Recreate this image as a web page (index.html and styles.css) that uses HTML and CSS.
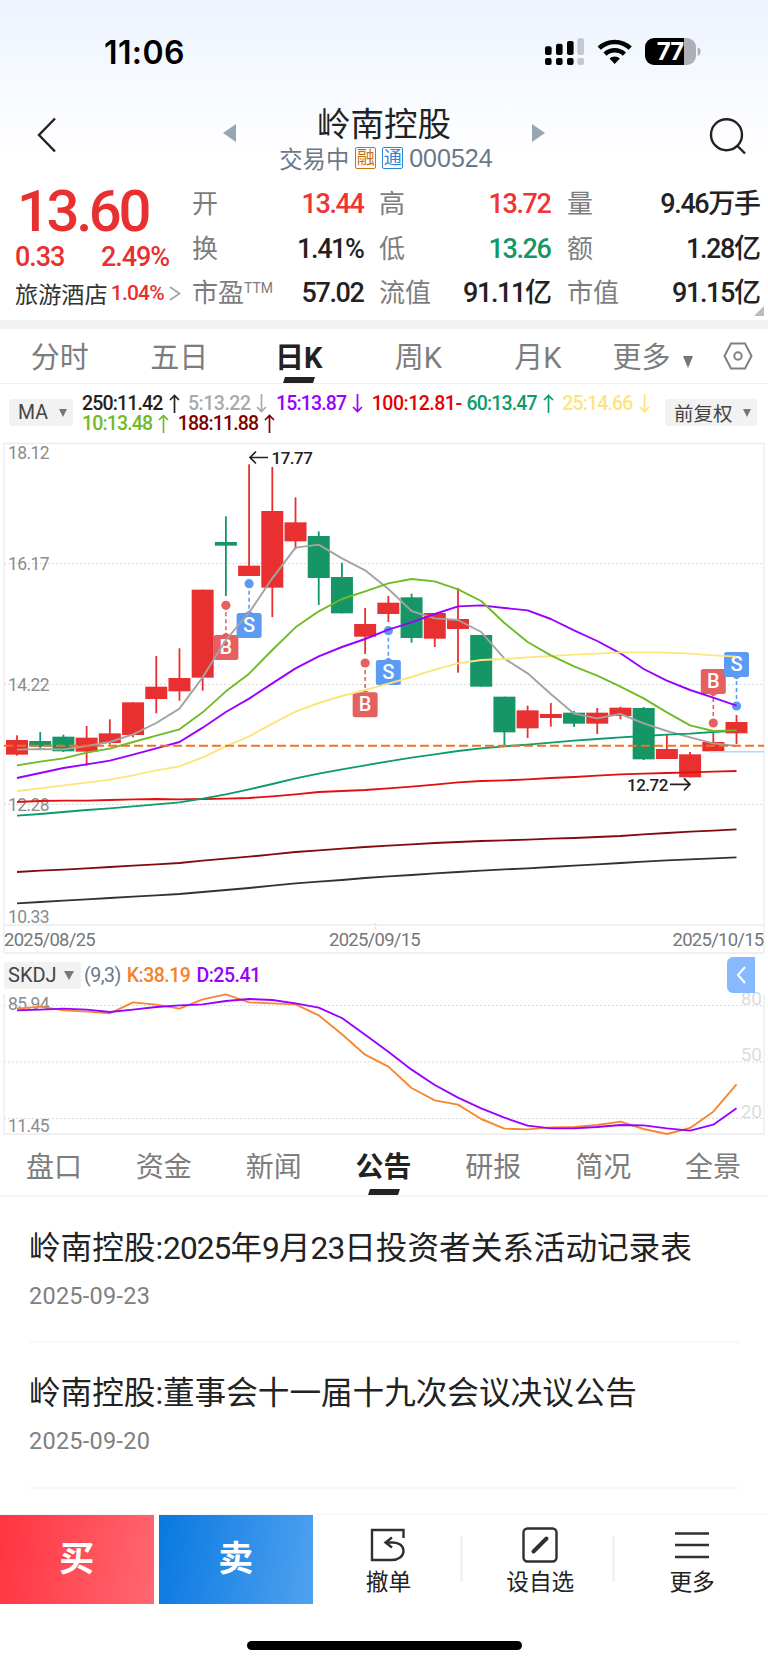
FILE: index.html
```html
<!DOCTYPE html>
<html lang="zh-CN">

<head>
    <meta charset="UTF-8">
    <meta name="viewport" content="width=device-width, initial-scale=1.0">
    <title>岭南控股</title>
    <link rel="stylesheet" href="styles.css">
</head>

<body>
    <div class="top">
        <div class="status">
            <span class="time">11:06</span>
            <svg class="status-icons" width="158" height="30" viewBox="544 37 158 30">
                <g fill="#000">
                    <rect x="545" y="46.3" width="6.6" height="8.7" rx="2" />
                    <rect x="556" y="43.7" width="6.6" height="11.3" rx="2" />
                    <rect x="567" y="41" width="6.6" height="14" rx="2" />
                    <rect x="545" y="58" width="6.6" height="7" rx="2" />
                    <rect x="556" y="58" width="6.6" height="7" rx="2" />
                    <rect x="567" y="58" width="6.6" height="7" rx="2" />
                </g>
                <g fill="#c5c8cd">
                    <rect x="577.4" y="38.3" width="6.6" height="16.7" rx="2" />
                    <rect x="577.4" y="58" width="6.6" height="7" rx="2" />
                </g>
                <g fill="none" stroke="#000" stroke-width="4.6">
                    <path d="M599.2 48.2a22.5 22.5 0 0 1 31 0" />
                    <path d="M605 54.2a14 14 0 0 1 19.4 0" />
                </g>
                <path d="M614.7 64l-5.2-5.4a7.6 7.6 0 0 1 10.4 0z" fill="#000" />
                <path d="M654 38h30v27h-30a9 9 0 0 1-9-9v-9a9 9 0 0 1 9-9z" fill="#000" />
                <path d="M684 38h3a9 9 0 0 1 9 9v9a9 9 0 0 1-9 9h-3z" fill="#aeb0b5" />
                <path d="M697.6 47.3q3 1 3 4.3t-3 4.3z" fill="#aeb0b5" />
                <text x="670" y="60" class="battery">77</text>
            </svg>
        </div>
        <header class="header">
            <svg class="back" width="22" height="36" viewBox="0 0 22 36">
                <path d="M19 1.500L3 18l16 16.500" />
            </svg>
            <i class="prev"></i>
            <div class="name">
                <h1>岭南控股</h1>
                <p>交易中<em class="rong">融</em><em class="tong">通</em><span>000524</span></p>
            </div>
            <i class="next"></i>
            <svg class="search" width="40" height="38" viewBox="0 0 40 38">
                <circle cx="17.500" cy="17.700" r="15.500" />
                <path d="M28.500 29l7.500 7.500" />
            </svg>
        </header>
    </div>

    <section class="quote">
        <div class="price">
            <strong>13.60</strong>
            <p class="change"><span>0.33</span><span>2.49%</span></p>
            <p class="industry">旅游酒店<b>1.04%</b><svg width="12" height="15" viewBox="0 0 12 15"><path d="M1 1l9.500 6.500L1 14" /></svg></p>
        </div>
        <dl class="c1">
            <div><dt>开</dt><dd class="red">13.44</dd></div>
            <div><dt>换</dt><dd>1.41%</dd></div>
            <div><dt>市盈<sup>TTM</sup></dt><dd>57.02</dd></div>
        </dl>
        <dl class="c2">
            <div><dt>高</dt><dd class="red">13.72</dd></div>
            <div><dt>低</dt><dd class="green">13.26</dd></div>
            <div><dt>流值</dt><dd>91.11亿</dd></div>
        </dl>
        <dl class="c3">
            <div><dt>量</dt><dd>9.46万手</dd></div>
            <div><dt>额</dt><dd>1.28亿</dd></div>
            <div><dt>市值</dt><dd>91.15亿</dd></div>
        </dl>
        <i class="corner"></i>
    </section>

    <nav class="period">
        <a>分时</a>
        <a>五日</a>
        <a class="on">日K</a>
        <a>周K</a>
        <a>月K</a>
        <a class="more">更多<i class="down"></i></a>
        <svg width="30" height="28" viewBox="0 0 30 28">
            <path d="M8 1.500h14L28.500 14 22 26.500H8L1.500 14z" />
            <circle cx="15" cy="14" r="3.700" />
        </svg>
    </nav>

    <div class="ma">
        <span class="btn">MA<i class="down"></i></span>
        <ul class="ma-list">
            <li class="m250">250:11.42<svg class="arr"><use href="#up" /></svg></li>
            <li class="m5">5:13.22<svg class="arr"><use href="#dn" /></svg></li>
            <li class="m15">15:13.87<svg class="arr"><use href="#dn" /></svg></li>
            <li class="m100">100:12.81-</li>
            <li class="m60">60:13.47<svg class="arr"><use href="#up" /></svg></li>
            <li class="m25">25:14.66<svg class="arr"><use href="#dn" /></svg></li>
            <li class="m10">10:13.48<svg class="arr"><use href="#up" /></svg></li>
            <li class="m188">188:11.88<svg class="arr"><use href="#up" /></svg></li>
        </ul>
        <span class="btn">前复权<i class="down"></i></span>
    </div>
    <svg class="defs">
        <symbol id="up" viewBox="0 0 11 19"><path d="M5.500 19V1.500M1 6l4.500-4.500L10 6" /></symbol>
        <symbol id="dn" viewBox="0 0 11 19"><path d="M5.500 0v17.500M1 13l4.500 4.500L10 13" /></symbol>
    </svg>

    <svg class="kline" width="768" height="516" viewBox="0 440 768 516">
        <path class="frame" d="M4 953V443.500H764V953M4 925H764M4 953H764" />
        <path class="grid" d="M4 563.500H764M4 684.500H764M4 804.500H764M375.500 923v6" />
        <g id="candles"></g>
        <g class="axis">
            <text x="8" y="458.500">18.12</text>
            <text x="8" y="570">16.17</text>
            <text x="8" y="691">14.22</text>
            <text x="8" y="811">12.28</text>
            <text x="8" y="922.500">10.33</text>
        </g>
        <g id="marks"></g>
        <path d="M710 751.700H764" stroke="#a8def5" stroke-width="1.500" />
        <g id="lines" class="lines"></g>
        <path class="now" d="M4 745.700H764" />
        <path class="tip" d="M268 457.500H250M256 451.500l-6 6 6 6M670 784.300h20M684 778.300l6 6-6 6" />
        <text class="tip-text" x="271.500" y="463.700">17.77</text>
        <text class="tip-text" x="627" y="790.700">12.72</text>
        <g class="date">
            <text x="4" y="946">2025/08/25</text>
            <text x="374.500" y="946" text-anchor="middle">2025/09/15</text>
            <text x="763.500" y="946" text-anchor="end">2025/10/15</text>
        </g>
    </svg>

    <div class="skdj-bar">
        <span class="btn">SKDJ<i class="down"></i></span>
        <span class="param">(9,3)</span>
        <span class="k">K:38.19</span>
        <span class="d">D:25.41</span>
        <span class="fold"><svg width="10" height="18" viewBox="0 0 10 18"><path d="M9 1L2 9l7 8" /></svg></span>
    </div>
    <svg class="skdj" width="768" height="144" viewBox="0 992 768 144">
        <path class="frame" d="M4 994V1134H764V994" />
        <path class="grid" d="M4 1005.500H764M4 1062H764M4 1118.500H764" />
        <g class="axis">
            <text x="8" y="1010">85.94</text>
            <text x="8" y="1132">11.45</text>
        </g>
        <g class="level">
            <text x="762" y="1005">80</text>
            <text x="762" y="1061">50</text>
            <text x="762" y="1118">20</text>
        </g>
        <g id="kd" class="lines"></g>
    </svg>

    <nav class="tabs">
        <a>盘口</a>
        <a>资金</a>
        <a>新闻</a>
        <a class="on">公告</a>
        <a>研报</a>
        <a>简况</a>
        <a>全景</a>
    </nav>

    <ul class="news">
        <li>
            <h2>岭南控股:<span>2025</span>年<span>9</span>月<span>23</span>日投资者关系活动记录表</h2>
            <p>2025-09-23</p>
        </li>
        <li>
            <h2>岭南控股:董事会十一届十九次会议决议公告</h2>
            <p>2025-09-20</p>
        </li>
    </ul>

    <footer class="footer">
        <a class="buy">买</a>
        <a class="sell">卖</a>
        <a class="tool">
            <svg width="36" height="36" viewBox="0 0 36 36">
                <path d="M33.500 11V3H2v30h19.500c7 0 12-3.700 12-9s-4.500-8.500-10.500-8.500h-6M22 10.500l-6.500 5 6.500 5" />
            </svg>
            撤单
        </a>
        <a class="tool">
            <svg width="36" height="36" viewBox="0 0 36 36">
                <rect x="1.500" y="1.500" width="33" height="33" rx="4" />
                <path d="M11.500 24.500l13-13" stroke-width="4" stroke-linecap="round" />
            </svg>
            设自选
        </a>
        <a class="tool">
            <svg width="36" height="36" viewBox="0 0 36 36">
                <path d="M1 6.500h34M1 18h34M1 30h34" />
            </svg>
            更多
        </a>
    </footer>
    <div class="home"></div>

    <script>
        //第i根K线的中心x坐标
        function px(i) {
            return 17 + 23.21 * i;
        }
        //纵坐标按三分之一像素记录
        function py(v, top) {
            return top + v / 3;
        }

        //涨跌, 实体上沿, 实体下沿, 最高, 最低
        var candles = [
            [1, 900, 944, 886, 947], [0, 903, 920, 876, 924], [0, 890, 934, 884, 936], [1, 893, 935, 858, 977],
            [1, 880, 909, 838, 914], [1, 787, 885, 787, 892], [1, 740, 777, 648, 820], [1, 714, 754, 625, 782],
            [1, 449, 713, 449, 752], [0, 306, 317, 229, 468], [1, 377, 408, 73, 408], [1, 213, 443, 81, 531],
            [1, 247, 304, 172, 328], [0, 288, 414, 274, 495], [0, 411, 520, 368, 520], [1, 552, 590, 504, 642],
            [1, 488, 522, 468, 546], [0, 472, 594, 461, 608], [1, 519, 596, 519, 621], [1, 537, 567, 444, 698],
            [0, 585, 740, 585, 740], [0, 770, 877, 770, 916], [1, 811, 865, 797, 894], [1, 822, 834, 789, 860],
            [0, 818, 851, 813, 861], [1, 818, 851, 804, 882], [1, 803, 828, 800, 838], [0, 804, 958, 801, 960],
            [1, 927, 957, 884, 957], [1, 943, 1012, 936, 1012], [1, 906, 934, 878, 934], [1, 846, 880, 825, 912]
        ];
        var html = '';
        for (var i = 0; i < candles.length; i++) {
            var c = candles[i];
            html += '<g fill="' + (c[0] ? '#e93030' : '#169666') + '">' +
                '<rect x="' + (px(i) - 11) + '" y="' + py(c[1], 440) + '" width="22" height="' + (c[2] - c[1]) / 3 + '"/>' +
                '<rect x="' + (px(i) - 0.9) + '" y="' + py(c[3], 440) + '" width="1.8" height="' + (c[4] - c[3]) / 3 + '"/></g>';
        }
        document.querySelector('#candles').innerHTML = html;

        //买卖点: 序号, 类型, 圆点, 方块上沿
        var marks = [
            [9, 'B', 496, 585], [10, 'S', 431, 519], [15, 'B', 669, 757],
            [16, 'S', 572, 660], [30, 'B', 849, 687], [31, 'S', 798, 636]
        ];
        html = '';
        for (i = 0; i < marks.length; i++) {
            var m = marks[i];
            var x = px(m[0]);
            var y = py(m[3], 440);
            var dot = py(m[2], 440);
            var end = dot < y ? y : y + 25;
            var tip = dot < y ? y - 2.5 : y + 27.5;
            var color = m[1] == 'B' ? '#e66060' : '#5b9bf5';
            html += '<g fill="' + color + '" stroke="none">' +
                '<path d="M' + x + ' ' + dot + 'V' + end + '" stroke="' + color + '" stroke-width="1.6" stroke-dasharray="4 3"/>' +
                '<circle cx="' + x + '" cy="' + dot + '" r="4.6"/>' +
                '<path d="M' + (x - 4) + ' ' + end + 'L' + x + ' ' + tip + 'L' + (x + 4) + ' ' + end + 'z"/>' +
                '<rect x="' + (x - 12.5) + '" y="' + y + '" width="25" height="25" rx="2.5"/>' +
                '<text class="mark" x="' + x + '" y="' + (y + 18.5) + '">' + m[1] + '</text></g>';
        }
        document.querySelector('#marks').innerHTML = html;

        function line(color, top, list) {
            var pts = [];
            for (var i = 0; i < list.length; i++) {
                pts.push(px(i) + ',' + py(list[i], top));
            }
            return '<polyline stroke="' + color + '" points="' + pts.join(' ') + '"/>';
        }

        //均线
        document.querySelector('#lines').innerHTML =
            line('#a3a3a3', 440, [929, 927, 928, 918, 906, 883, 849, 806, 712, 600, 518, 415, 323, 314, 355, 391, 447, 513, 535, 540, 576, 656, 700, 762, 821, 835, 822, 850, 873, 892, 910, 918]) +
            line('#9a00ff', 440, [1014, 999, 984, 973, 962, 944, 925, 906, 863, 816, 776, 730, 685, 649, 621, 597, 569, 547, 522, 499, 496, 504, 511, 537, 571, 603, 640, 687, 722, 750, 773, 797]) +
            line('#e01010', 440, [1086, 1083, 1082, 1082, 1080, 1078, 1077, 1078, 1077, 1076, 1074, 1069, 1063, 1056, 1053, 1050, 1045, 1040, 1034, 1027, 1023, 1021, 1018, 1014, 1011, 1007, 1003, 1001, 999, 997, 995, 993]) +
            line('#0c9c6c', 440, [1127, 1122, 1116, 1110, 1105, 1099, 1093, 1087, 1076, 1063, 1048, 1032, 1015, 1001, 988, 976, 964, 953, 943, 933, 925, 919, 914, 908, 902, 897, 892, 888, 884, 881, 876, 872]) +
            line('#fde57c', 440, [1053, 1045, 1036, 1028, 1019, 1006, 991, 979, 952, 919, 889, 851, 815, 789, 768, 750, 731, 711, 689, 670, 660, 657, 652, 648, 644, 641, 637, 637, 638, 641, 646, 650]) +
            line('#6fbb25', 440, [976, 965, 955, 938, 926, 906, 887, 868, 817, 754, 701, 630, 562, 514, 477, 454, 430, 417, 424, 448, 483, 549, 606, 646, 679, 707, 740, 775, 817, 856, 873, 871]) +
            line('#800c10', 440, [1296, 1292, 1289, 1285, 1281, 1277, 1273, 1269, 1262, 1256, 1250, 1243, 1236, 1231, 1226, 1221, 1217, 1213, 1209, 1206, 1203, 1201, 1199, 1196, 1194, 1191, 1188, 1183, 1179, 1175, 1172, 1168]) +
            line('#303236', 440, [1390, 1386, 1382, 1378, 1374, 1370, 1366, 1362, 1356, 1350, 1344, 1337, 1330, 1325, 1320, 1314, 1309, 1305, 1300, 1296, 1292, 1288, 1285, 1281, 1277, 1273, 1269, 1265, 1261, 1258, 1255, 1252]);

        //SKDJ
        document.querySelector('#kd').innerHTML =
            line('#f6882f', 950, [176, 170, 181, 185, 190, 157, 164, 176, 148, 133, 157, 160, 163, 196, 253, 314, 350, 414, 451, 464, 507, 536, 538, 532, 531, 525, 515, 537, 552, 534, 485, 403]) +
            line('#9a00ff', 950, [181, 179, 176, 179, 186, 179, 171, 166, 163, 153, 147, 150, 160, 173, 204, 254, 305, 359, 405, 443, 475, 503, 527, 535, 535, 531, 525, 526, 535, 542, 524, 475]);
    </script>
</body>

</html>
```
FILE: styles.css
```css
body,
h1,
h2,
p,
ul,
dl,
dd {
    margin: 0;
    padding: 0;
    list-style: none;
    font-weight: normal;
}

body {
    width: 768px;
    height: 1665px;
    overflow: hidden;
    background: #fff;
    color: #222;
    font-family: Roboto, "Noto Sans CJK SC", sans-serif;
}

em,
i {
    font-style: normal;
}

svg {
    display: block;
    fill: none;
    flex: none;
}

.defs {
    width: 0;
    height: 0;
    position: absolute;
}

.top {
    height: 180px;
    background: linear-gradient(#edf4ff, #fff 160px);
}

.status {
    display: flex;
    justify-content: space-between;
    height: 67px;
    padding: 37px 66px 0 104px;
    box-sizing: border-box;
}

.time {
    font: 600 32px/32px Inter, sans-serif;
    color: #000;
    letter-spacing: 0.4px;
}

.battery {
    font: 700 24px Inter, sans-serif;
    letter-spacing: -1px;
    fill: #fff;
    text-anchor: middle;
}

.header {
    display: flex;
    height: 113px;
    padding: 0 20px 0 36px;
}

.header svg {
    stroke: #222;
    stroke-width: 2.4;
    margin-top: 50px;
}

.back {
    margin-right: 165px;
}

.prev,
.next {
    margin-top: 57px;
    border: solid transparent;
    border-width: 9px 0;
    height: 0;
}

.prev {
    border-right: 13px solid #9aa5b1;
}

.next {
    border-left: 13px solid #9aa5b1;
}

.name {
    width: 296px;
    text-align: center;
    white-space: nowrap;
}

.search {
    margin-left: auto;
    margin-right: -1px;
}

.name h1 {
    margin-top: 38px;
    font-size: 33.5px;
    line-height: 40px;
}

.name p {
    display: flex;
    justify-content: center;
    align-items: center;
    height: 26px;
    margin-left: 4px;
    font-size: 23.3px;
    color: #6b7886;
}

.name em {
    width: 19px;
    height: 20px;
    margin-left: 6px;
    border: 1px solid;
    border-radius: 2px;
    font-size: 18px;
    line-height: 20px;
}

.rong {
    color: #c8741c;
}

.tong {
    color: #2f86d2;
}

.name span {
    margin-left: 6px;
    font-family: "Liberation Sans", sans-serif;
    font-size: 25px;
}

.quote {
    position: relative;
    display: flex;
    height: 140px;
    border-bottom: 9px solid #f2f2f2;
}

.price {
    width: 177px;
    padding-left: 15px;
    color: #e93030;
}

.price strong {
    display: block;
    height: 61px;
    padding-left: 2px;
    font-size: 58px;
    line-height: 63px;
    font-weight: 500;
    letter-spacing: -3.4px;
}

.change {
    display: flex;
    justify-content: space-between;
    width: 154px;
    font-size: 27px;
    line-height: 32px;
    font-weight: 500;
    letter-spacing: -1.1px;
}

.industry {
    display: flex;
    align-items: center;
    height: 40px;
    font-size: 23.2px;
    color: #333;
    white-space: nowrap;
}

.industry b {
    margin: 0 5px 0 3px;
    font-size: 21px;
    font-weight: 500;
    color: #e93030;
    letter-spacing: -0.8px;
}

.industry svg {
    stroke: #9aa5b1;
    stroke-width: 1.8;
}

dl {
    padding-top: 2px;
}

dl div {
    display: flex;
    justify-content: space-between;
    height: 44.5px;
    line-height: 44.5px;
    white-space: nowrap;
}

.c1 {
    width: 171px;
}

.c2 {
    width: 171px;
    margin-left: 16px;
}

.c3 {
    width: 192px;
    margin-left: 17px;
}

dt {
    font-size: 26px;
    color: #7d7d7d;
}

dt sup {
    font-size: 14px;
    line-height: 0;
    vertical-align: 9px;
}

dd {
    font-size: 27px;
    font-weight: 500;
    letter-spacing: -1.4px;
    margin-right: -0.5px;
}

.red {
    color: #f03434;
}

.green {
    color: #169666;
}

.corner {
    position: absolute;
    right: 4px;
    bottom: 4px;
    border-left: 10px solid transparent;
    border-bottom: 10px solid #bbb;
}

.period {
    display: flex;
    align-items: center;
    height: 55px;
    padding-right: 15px;
    border-bottom: 1.5px solid #f0f0f0;
    box-sizing: border-box;
    font-size: 29px;
    line-height: 58px;
    color: #7d7d7d;
}

.period a {
    width: 119.5px;
    height: 54px;
    text-align: center;
}

.period svg {
    margin-left: auto;
    stroke: #808080;
    stroke-width: 2;
}

.on {
    position: relative;
    font-weight: 700;
    color: #222;
}

.period .on,
.tabs .on {
    color: #222;
}

.on::after {
    content: "";
    position: absolute;
    left: 50%;
    bottom: 0;
    width: 30px;
    height: 6px;
    margin-left: -15px;
    background: #222;
    transform: skewX(-18deg);
}

.down {
    display: inline-block;
    border: solid transparent;
    border-width: 8px 4.5px 0;
    border-top-color: #777;
}

.more .down {
    margin-left: 12px;
    border-width: 12px 5.5px 0;
}

.period .more {
    margin-left: 15px;
    width: 84px;
    white-space: nowrap;
    text-align: left;
}

.ma {
    display: flex;
    height: 56px;
    padding: 8px 11px 0 9px;
    box-sizing: border-box;
}

.btn {
    display: flex;
    align-items: center;
    justify-content: space-between;
    height: 27px;
    padding: 0 6px 0 9px;
    margin-top: 7px;
    border-radius: 3px;
    background: #f2f2f2;
    box-sizing: border-box;
    font-size: 19.5px;
    color: #444;
}

.ma .btn {
    width: 64px;
}

.ma .btn:last-child {
    width: 92px;
}

.ma-list {
    display: flex;
    flex-wrap: wrap;
    align-content: flex-start;
    width: 582px;
    margin: 1.5px 1px 0 9px;
    box-sizing: border-box;
}

.ma-list li {
    display: flex;
    align-items: center;
    height: 20px;
    margin-right: 8.5px;
    font-size: 19.5px;
    font-weight: 500;
    letter-spacing: -0.85px;
}

.ma-list .m5,
.ma-list .m100 {
    letter-spacing: -0.5px;
}

.ma-list .m100 {
    margin-right: 5px;
}

.arr {
    width: 11px;
    height: 19px;
    margin-left: 6px;
    stroke: currentColor;
    stroke-width: 1.7;
}

.m250 {
    color: #222;
}

.m5 {
    color: #aaa;
}

.m15,
.d {
    color: #9a00ff;
}

.m100 {
    color: #e60000;
}

.m60 {
    color: #0c9c6c;
}

.m25 {
    color: #fde57c;
}

.m10 {
    color: #6fbb25;
}

.m188 {
    color: #800000;
}

.frame {
    stroke: #ececec;
    stroke-width: 1.3;
}

.grid {
    stroke: #dcdcdc;
    stroke-width: 1.2;
    stroke-dasharray: 2 2;
}

.axis {
    font-size: 17.5px;
    letter-spacing: -0.6px;
    fill: #8c8c8c;
}

.date {
    font-size: 18.5px;
    letter-spacing: -0.75px;
    fill: #777;
}

.skdj {
    overflow: visible;
}

.level {
    font-size: 19px;
    fill: #ddd;
    text-anchor: end;
}

.lines {
    stroke-width: 1.9;
    stroke-linejoin: round;
}

.now {
    stroke: #f07320;
    stroke-width: 2;
    stroke-dasharray: 9 4;
}

.tip {
    stroke: #222;
    stroke-width: 1.7;
}

.tip-text {
    font-size: 17px;
    font-weight: 500;
    letter-spacing: -0.5px;
    fill: #222;
}

.mark {
    font-size: 20px;
    font-weight: 500;
    fill: #fff;
    text-anchor: middle;
}

.skdj-bar {
    display: flex;
    align-items: center;
    height: 36px;
    padding-left: 4px;
    font-size: 19.5px;
    line-height: 27px;
    letter-spacing: -0.5px;
}

.skdj-bar .btn {
    width: 77px;
    margin: 3px 3px 0 0;
    padding: 0 7px 0 4px;
    font-size: 20px;
    letter-spacing: 0;
}

.skdj-bar .down {
    border-width: 9px 5.5px 0;
}

.param,
.k,
.skdj-bar .d {
    margin-top: 3px;
}

.param {
    margin-right: 6px;
    color: #6b7886;
}

.k {
    margin-right: 6px;
    color: #f6802b;
}

.k,
.d {
    font-weight: 500;
}

.fold {
    position: relative;
    z-index: 1;
    display: flex;
    align-items: center;
    justify-content: center;
    width: 28px;
    height: 36px;
    margin: 2px 13px 0 auto;
    border-radius: 6px 0 0 6px;
    background: #86b9fd;
}

.fold svg {
    stroke: #fff;
    stroke-width: 2;
}

.tabs {
    display: flex;
    height: 61px;
    margin-left: -1px;
    border-bottom: 2px solid #f5f5f5;
    box-sizing: border-box;
    font-size: 28px;
    line-height: 63px;
    color: #7d7d7d;
}

.tabs a {
    flex: 1;
    text-align: center;
}

.news {
    height: 317px;
    overflow: hidden;
}

.news li {
    height: 146px;
    margin: 0 28px 0 29px;
    padding-top: 28px;
    border-bottom: 2px solid #f8f8f8;
    box-sizing: border-box;
    white-space: nowrap;
}

.news li + li {
    padding-top: 27px;
}

.news h2 {
    font-size: 31.6px;
    line-height: 48px;
}

.news span {
    letter-spacing: -0.9px;
}

.news p {
    margin-top: 8px;
    font-size: 23.5px;
    line-height: 30px;
    letter-spacing: 0.25px;
    color: #808080;
}

.footer {
    display: flex;
    height: 89px;
    border-top: 1px solid #f6f6f6;
}

.buy,
.sell {
    width: 153.5px;
    margin-right: 5.5px;
    font-size: 35px;
    line-height: 89px;
    font-weight: 700;
    color: #fff;
    text-align: center;
}

.buy {
    background: linear-gradient(100deg, #ff3440, #ff6871);
}

.sell {
    margin: 0;
    background: linear-gradient(100deg, #0878e0, #50a2f0);
}

.tool {
    position: relative;
    flex: 1;
    display: flex;
    flex-direction: column;
    align-items: center;
    padding-top: 12px;
    font-size: 22.7px;
    line-height: 40px;
}

.tool + .tool::before {
    content: "";
    position: absolute;
    left: -4px;
    top: 21px;
    width: 3px;
    height: 46px;
    background: #f3f3f3;
}

.tool svg {
    stroke: #303030;
    stroke-width: 2.4;
}

.home {
    width: 275px;
    height: 9px;
    margin: 37px auto 0;
    border-radius: 5px;
    background: #000;
}
```
